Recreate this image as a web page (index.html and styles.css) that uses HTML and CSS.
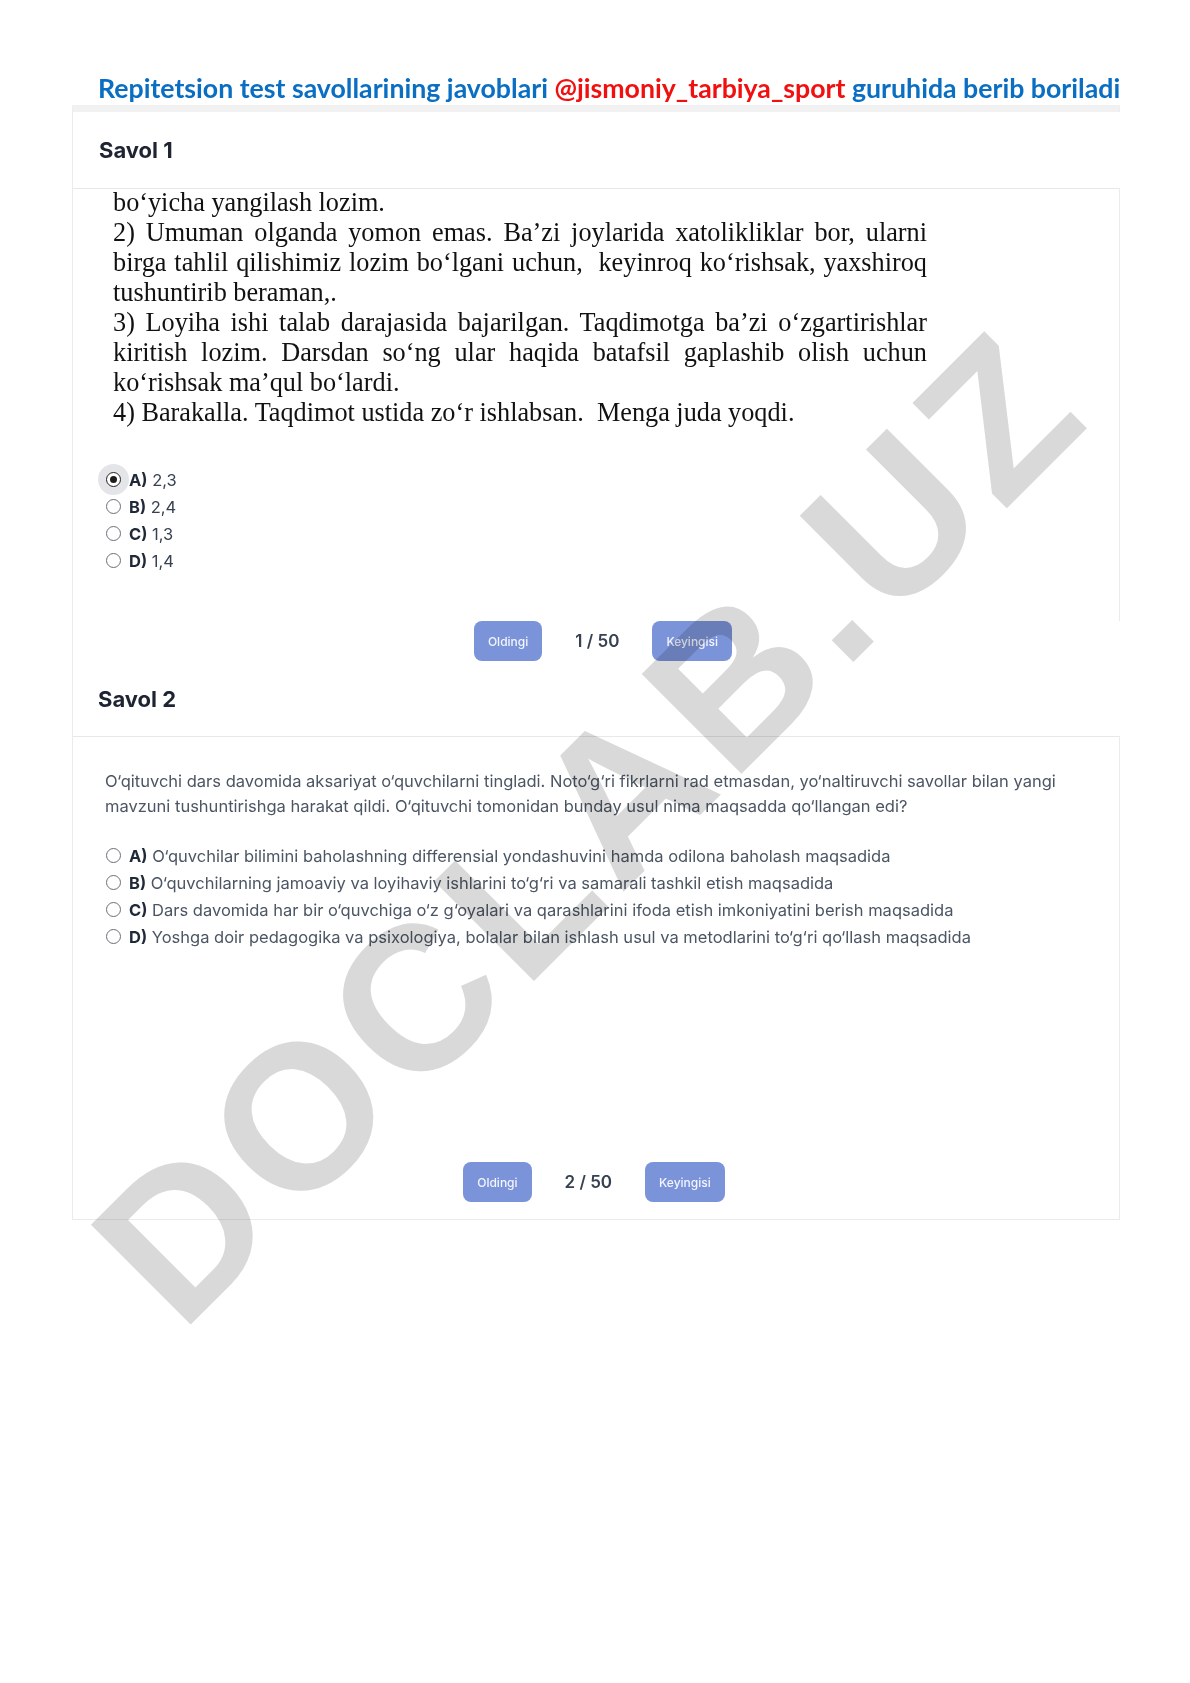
FILE: index.html
```html
<!DOCTYPE html>
<html lang="uz">
<head>
<meta charset="utf-8">
<title>Savollar</title>
<link rel="stylesheet" href="styles.css">
</head>
<body>
<h1 class="title">Repitetsion test savollarining javoblari <span class="tg">@jismoniy_tarbiya_sport</span> guruhida berib boriladi</h1>

<div class="card">
  <div class="q-head">Savol 1</div>
  <div class="doc">
    <div class="ln">bo‘yicha yangilash lozim.</div>
    <div class="ln j">2) Umuman olganda yomon emas. Ba’zi joylarida xatolikliklar bor, ularni</div>
    <div class="ln j">birga tahlil qilishimiz lozim bo‘lgani uchun,&nbsp; keyinroq ko‘rishsak, yaxshiroq</div>
    <div class="ln">tushuntirib beraman,.</div>
    <div class="ln j">3) Loyiha ishi talab darajasida bajarilgan. Taqdimotga ba’zi o‘zgartirishlar</div>
    <div class="ln j">kiritish lozim. Darsdan so‘ng ular haqida batafsil gaplashib olish uchun</div>
    <div class="ln">ko‘rishsak ma’qul bo‘lardi.</div>
    <div class="ln">4) Barakalla. Taqdimot ustida zo‘r ishlabsan.&nbsp; Menga juda yoqdi.</div>
  </div>
  <ul class="opts opts-1">
    <li class="opt"><span class="radio on"></span><b>A)</b>&nbsp;2,3</li>
    <li class="opt"><span class="radio"></span><b>B)</b>&nbsp;2,4</li>
    <li class="opt"><span class="radio"></span><b>C)</b>&nbsp;1,3</li>
    <li class="opt"><span class="radio"></span><b>D)</b>&nbsp;1,4</li>
  </ul>
  <div class="pager pager-1">
    <span class="btn">Oldingi</span>
    <span class="count">1 / 50</span>
    <span class="btn">Keyingisi</span>
  </div>

  <div class="q-head q-head-2">Savol 2</div>
  <div class="qtext">O‘qituvchi dars davomida aksariyat o‘quvchilarni tingladi. Noto‘g‘ri fikrlarni rad etmasdan, yo‘naltiruvchi savollar bilan yangi<br>mavzuni tushuntirishga harakat qildi. O‘qituvchi tomonidan bunday usul nima maqsadda qo‘llangan edi?</div>
  <ul class="opts opts-2">
    <li class="opt"><span class="radio"></span><b>A)</b>&nbsp;O‘quvchilar bilimini baholashning differensial yondashuvini hamda odilona baholash maqsadida</li>
    <li class="opt"><span class="radio"></span><b>B)</b>&nbsp;O‘quvchilarning jamoaviy va loyihaviy ishlarini to‘g‘ri va samarali tashkil etish maqsadida</li>
    <li class="opt"><span class="radio"></span><b>C)</b>&nbsp;Dars davomida har bir o‘quvchiga o‘z g‘oyalari va qarashlarini ifoda etish imkoniyatini berish maqsadida</li>
    <li class="opt"><span class="radio"></span><b>D)</b>&nbsp;Yoshga doir pedagogika va psixologiya, bolalar bilan ishlash usul va metodlarini to‘g‘ri qo‘llash maqsadida</li>
  </ul>
  <div class="pager pager-2">
    <span class="btn">Oldingi</span>
    <span class="count">2 / 50</span>
    <span class="btn">Keyingisi</span>
  </div>
</div>

<div class="wm">DOCLAB.UZ</div>
</body>
</html>
```
FILE: styles.css
```css
* { box-sizing: border-box; }

html, body {
  margin: 0;
  padding: 0;
  background: #fff;
}

body {
  position: relative;
  width: 1190px;
  min-height: 1683px;
  font-family: Inter, "Noto Sans", sans-serif;
  color: #1f2937;
}

.title {
  margin: 0;
  height: 105px;
  padding: 72px 0 0 98px;
  font-family: Lato, "Liberation Sans", sans-serif;
  font-weight: 700;
  font-size: 26.7px;
  line-height: 32px;
  color: #0a6ec2;
  white-space: nowrap;
}

.title .tg { color: #f01010; }

.card {
  margin-left: 72px;
  width: 1048px;
  border: 1px solid #ebebeb;
  border-top: 7px solid #f1f1f1;
  padding-bottom: 17px;
}

.q-head {
  height: 77px;
  display: flex;
  align-items: center;
  padding-left: 26px;
  margin-right: -1px;
  background: #fff;
  border-bottom: 1px solid #e8e8e8;
  font-size: 22px;
  font-weight: 700;
  color: #1f2433;
}

.q-head-2 {
  height: 76px;
  padding-left: 25px;
}

.doc {
  margin-top: -1px;
  padding-left: 40px;
  font-family: "Liberation Serif", "Times New Roman", serif;
  font-size: 26.25px;
  line-height: 30px;
  color: #111;
}

.doc .ln { width: 814px; }

.doc .j {
  text-align: justify;
  text-align-last: justify;
}

.qtext {
  padding: 32px 32px 0;
  font-size: 16.5px;
  line-height: 25px;
  color: #4b5563;
  white-space: nowrap;
}

.opts {
  list-style: none;
  margin: 0;
  padding: 0 0 0 33px;
}

.opts-1 { margin-top: 38px; }
.opts-2 { margin-top: 23px; }

.opt {
  height: 27px;
  display: flex;
  align-items: center;
  font-size: 16.5px;
  color: #4b5563;
  white-space: nowrap;
}

.opt b {
  font-weight: 700;
  color: #1f2937;
}

.opts-1 .opt { color: #374151; }

.radio {
  flex: none;
  position: relative;
  width: 15px;
  height: 15px;
  margin-right: 8px;
  border: 1.5px solid #6b6f76;
  border-radius: 50%;
  background: #fff;
}

.radio.on {
  border-color: #222;
  box-shadow: 0 0 0 8px #e4e5e8;
}

.radio.on::after {
  content: "";
  position: absolute;
  left: 50%;
  top: 50%;
  width: 7px;
  height: 7px;
  margin: -3.5px 0 0 -3.5px;
  border-radius: 50%;
  background: #1d1d1d;
}

.pager {
  display: flex;
  justify-content: center;
  align-items: center;
  gap: 33px;
  height: 40px;
}

.pager-1 {
  margin-top: 47px;
  padding-left: 13px;
  margin-right: -1px;
  background: #fff;
}

.pager-2 {
  margin-top: 212px;
  padding-right: 4px;
}

.btn {
  height: 40px;
  display: flex;
  align-items: center;
  padding: 0 14px;
  border-radius: 8px;
  background: #7b93d8;
  color: #f3f5ff;
  font-size: 12px;
  font-weight: 500;
}

.count {
  font-size: 17px;
  font-weight: 600;
  color: #374151;
}

.wm {
  position: absolute;
  left: 589px;
  top: 825px;
  transform: translate(-50%, -50%) rotate(-45deg);
  font-family: "Liberation Sans", Arial, sans-serif;
  font-weight: 700;
  font-size: 205px;
  line-height: 1;
  letter-spacing: 10px;
  color: #d9d9d9;
  mix-blend-mode: multiply;
  white-space: nowrap;
  pointer-events: none;
}
```
